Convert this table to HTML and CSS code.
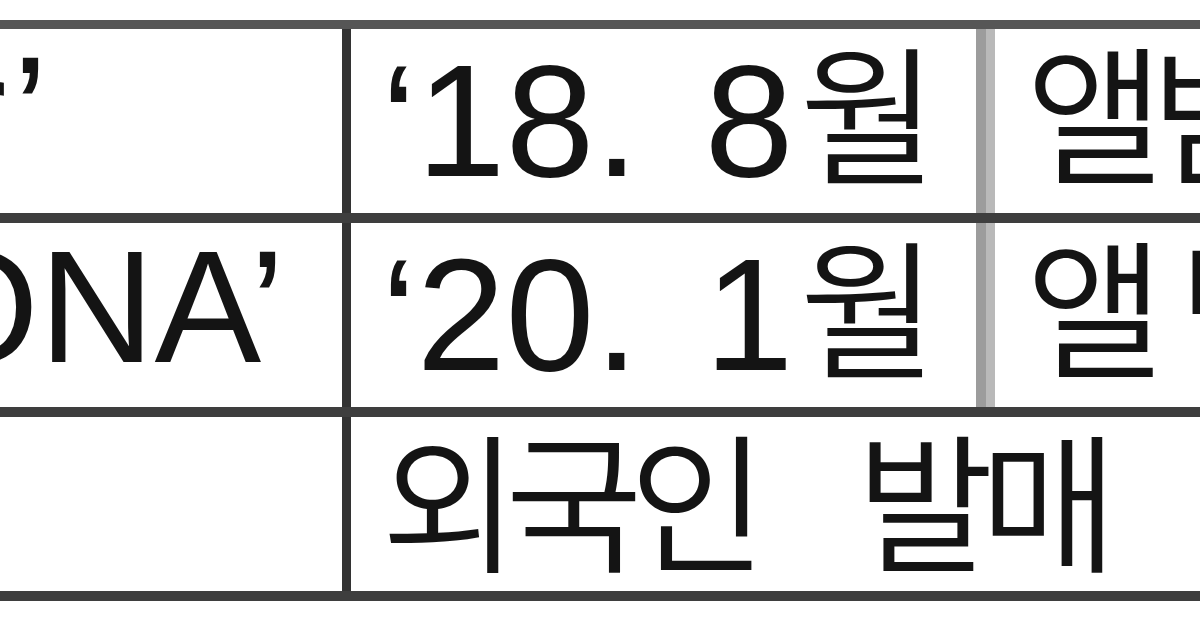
FILE: index.html
```html
<!DOCTYPE html>
<html lang="ko">
<head>
<meta charset="utf-8">
<title>표</title>
<link rel="stylesheet" href="styles.css">
</head>
<body>
<div class="table">
  <div class="row">
    <div class="cell name name-a">LOVE YOURSELF <span class="ko">結</span> ‘Answer’</div>
    <div class="cell date">‘18. 8<span class="ko ko-unit">월</span></div>
    <div class="cell kind"><span class="ko">앨범 발매</span></div>
  </div>
  <div class="row">
    <div class="cell name name-b">MAP OF THE SOUL : PERSONA’</div>
    <div class="cell date">‘20. 1<span class="ko ko-unit">월</span></div>
    <div class="cell kind"><span class="ko">앨 범</span></div>
  </div>
  <div class="row row-last">
    <div class="cell name"></div>
    <div class="cell wide"><span class="ko ko-wide">외국인 발매</span></div>
  </div>
</div>
</body>
</html>
```
FILE: styles.css
```css
html, body {
  margin: 0;
  padding: 0;
  background: #ffffff;
}

body {
  width: 1200px;
  height: 630px;
  overflow: hidden;
  font-family: "Liberation Sans", "Noto Sans CJK KR", sans-serif;
  font-size: 160px;
  line-height: 1;
  color: #141414;
}

.table {
  margin-top: 20px;
  border-top: 9px solid #565656;
  width: 1200px;
}

.row {
  display: grid;
  grid-template-columns: 342px 634px 1fr;
  height: 184px;
  border-bottom: 10px solid #3e3e3e;
}

.row-last {
  grid-template-columns: 342px 1fr;
  height: 174px;
}

.cell {
  white-space: nowrap;
  overflow: hidden;
  padding-top: 4px;
  box-sizing: border-box;
}

.name {
  text-align: right;
  display: flex;
  justify-content: flex-end;
}

.name-a {
  padding-right: 294px;
}

.name-b {
  padding-right: 57px;
}

.date {
  border-left: 9px solid #333333;
  padding-left: 30px;
  word-spacing: 21px;
}

.wide {
  border-left: 9px solid #333333;
  padding-left: 30px;
}

.kind {
  border-left: 10px solid #9c9c9c;
  box-shadow: inset 9px 0 0 #b9b9b9;
  padding-left: 40px;
}

.ko {
  display: inline-block;
  font-family: "Noto Sans CJK KR", sans-serif;
  font-weight: 350;
  font-size: 150px;
  line-height: 1;
  letter-spacing: -14px;
  vertical-align: 3px;
}

.ko-unit {
  margin-left: 6px;
}

.ko-wide {
  word-spacing: 75px;
}
```
